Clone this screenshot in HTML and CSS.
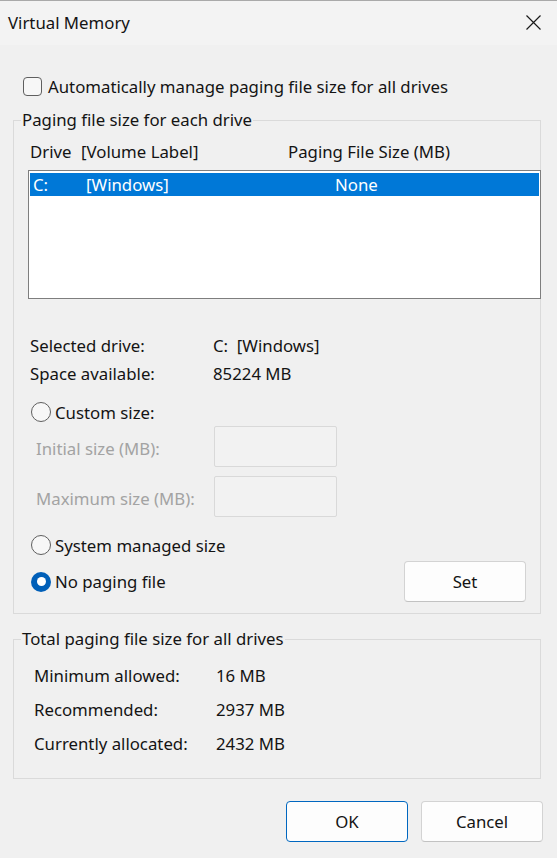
FILE: index.html
```html
<!DOCTYPE html>
<html lang="en">
<head>
<meta charset="utf-8">
<title>Virtual Memory</title>
<link rel="stylesheet" href="styles.css">
</head>
<body>
<div class="window">
  <div class="titlebar">
    <span class="title">Virtual Memory</span>
    <svg class="close" width="15" height="15" viewBox="0 0 15 15" aria-hidden="true">
      <path d="M0.5 0.5 L14.5 14.5 M14.5 0.5 L0.5 14.5" stroke="#1a1a1a" stroke-width="1.2" fill="none"/>
    </svg>
  </div>
  <div class="content">
    <div class="check-row">
      <span class="checkbox"></span>
      <span class="check-label">Automatically manage paging file size for all drives</span>
    </div>

    <fieldset class="group group-drives">
      <legend>Paging file size for each drive</legend>
      <div class="list-head">
        <span class="h-drive">Drive</span>
        <span class="h-label">[Volume Label]</span>
        <span class="h-size">Paging File Size (MB)</span>
      </div>
      <div class="listbox">
        <div class="list-row selected">
          <span class="r-drive">C:</span>
          <span class="r-label">[Windows]</span>
          <span class="r-size">None</span>
        </div>
      </div>
      <div class="info">
        <div class="info-row"><span class="info-key">Selected drive:</span><span>C:&nbsp;&nbsp;[Windows]</span></div>
        <div class="info-row"><span class="info-key">Space available:</span><span>85224 MB</span></div>
      </div>
      <div class="radio-row r-custom"><span class="radio"></span><span>Custom size:</span></div>
      <div class="field-row f-initial"><span class="field-label">Initial size (MB):</span><span class="field-box"></span></div>
      <div class="field-row f-max"><span class="field-label">Maximum size (MB):</span><span class="field-box"></span></div>
      <div class="radio-row r-system"><span class="radio"></span><span>System managed size</span></div>
      <div class="set-row">
        <div class="radio-row r-none"><span class="radio checked"></span><span>No paging file</span></div>
        <button class="btn btn-set">Set</button>
      </div>
    </fieldset>

    <fieldset class="group group-total">
      <legend>Total paging file size for all drives</legend>
      <div class="total-row t-first"><span class="total-key">Minimum allowed:</span><span>16 MB</span></div>
      <div class="total-row"><span class="total-key">Recommended:</span><span>2937 MB</span></div>
      <div class="total-row"><span class="total-key">Currently allocated:</span><span>2432 MB</span></div>
    </fieldset>

    <div class="buttons">
      <button class="btn btn-default">OK</button>
      <button class="btn">Cancel</button>
    </div>
  </div>
</div>
</body>
</html>
```

FILE: styles.css
```css
* { box-sizing: border-box; }

html, body {
  margin: 0;
  padding: 0;
  background: #f0f0f0;
}

body {
  font-family: "Noto Sans", "Open Sans", sans-serif;
  font-size: 16.8px;
  color: #141414;
  width: 557px;
  height: 858px;
  overflow: hidden;
}

.window {
  border-top: 1px solid #a9a9a9;
  height: 858px;
}

.titlebar {
  height: 44px;
  background: #f3f3f3;
  display: flex;
  align-items: center;
  justify-content: space-between;
  padding: 0 16px 0 8px;
}

.title {
  line-height: 22px;
  margin-top: -1px;
}

.close {
  display: block;
  margin-top: -2px;
}

.content {
  display: flex;
  flex-direction: column;
}

.check-row {
  margin: 29px 0 0 23px;
  height: 24px;
  display: flex;
  align-items: center;
  gap: 6px;
}

.checkbox {
  width: 19px;
  height: 19px;
  border: 1px solid #5f5f5f;
  border-radius: 4px;
  background: #f7f7f7;
}

.group {
  margin: 0 16px 0 13px;
  padding: 0;
  border: 1px solid #dadada;
  min-width: 0;
}

.group legend {
  padding: 0 1px;
  margin-left: 7px;
  line-height: 22px;
  height: 22px;
}

.group-drives {
  margin-top: 11px;
  padding-bottom: 11px;
}

.list-head {
  margin-top: 10px;
  height: 22px;
  line-height: 22px;
  display: flex;
  padding-left: 16px;
}

.h-drive { width: 51px; }
.h-label { width: 207px; }

.listbox {
  margin: 7px -1px 0 14px;
  height: 129px;
  border: 1px solid #7e7e7e;
  background: #ffffff;
  padding: 2px 1px;
}

.list-row {
  height: 23px;
  line-height: 23px;
  display: flex;
  padding-left: 3px;
}

.list-row.selected {
  background: #0078d7;
  color: #ffffff;
}

.r-drive { width: 53px; }
.r-label { width: 249px; }

.info {
  margin-top: 33px;
  padding-left: 16px;
}

.info-row {
  height: 28px;
  line-height: 28px;
  display: flex;
}

.info-key { width: 183px; }

.radio-row {
  height: 24px;
  display: flex;
  align-items: center;
  gap: 4px;
  padding-left: 17px;
}

.radio {
  width: 20px;
  height: 20px;
  border: 1px solid #5f5f5f;
  border-radius: 50%;
  background: #f7f7f7;
  flex: none;
}

.radio.checked {
  border: none;
  background: #005fb8;
  display: flex;
  align-items: center;
  justify-content: center;
}

.radio.checked::after {
  content: "";
  width: 9px;
  height: 9px;
  border-radius: 50%;
  background: #ffffff;
}

.r-custom { margin-top: 12px; }

.field-row {
  height: 41px;
  display: flex;
  align-items: center;
  padding-left: 22px;
  color: #a3a3a3;
}

.f-initial { margin-top: 2px; }
.f-max { margin-top: 9px; }

.field-label {
  width: 178px;
  padding-top: 3px;
}

.field-box {
  width: 123px;
  height: 41px;
  border: 1px solid #d9d9d9;
  border-radius: 2px;
  background: #f2f2f2;
}

.r-system { margin-top: 16px; }

.set-row {
  margin-top: 4px;
  height: 41px;
  display: flex;
  align-items: center;
  justify-content: space-between;
  padding-right: 14px;
}

.btn {
  font-family: inherit;
  font-size: 16.8px;
  color: #141414;
  width: 122px;
  height: 41px;
  padding: 0;
  background: #fdfdfd;
  border: 1px solid #d3d3d3;
  border-bottom-color: #c2c2c2;
  border-radius: 4px;
}

.group-total {
  margin-top: 14px;
  padding-bottom: 17px;
}

.total-row {
  height: 34px;
  line-height: 34px;
  display: flex;
  padding-left: 20px;
}

.t-first { margin-top: 9px; }

.total-key { width: 182px; }

.buttons {
  margin-top: 22px;
  display: flex;
  justify-content: flex-end;
  gap: 13px;
  padding-right: 14px;
}

.btn-default {
  border: 1px solid #0067c0;
}
```
